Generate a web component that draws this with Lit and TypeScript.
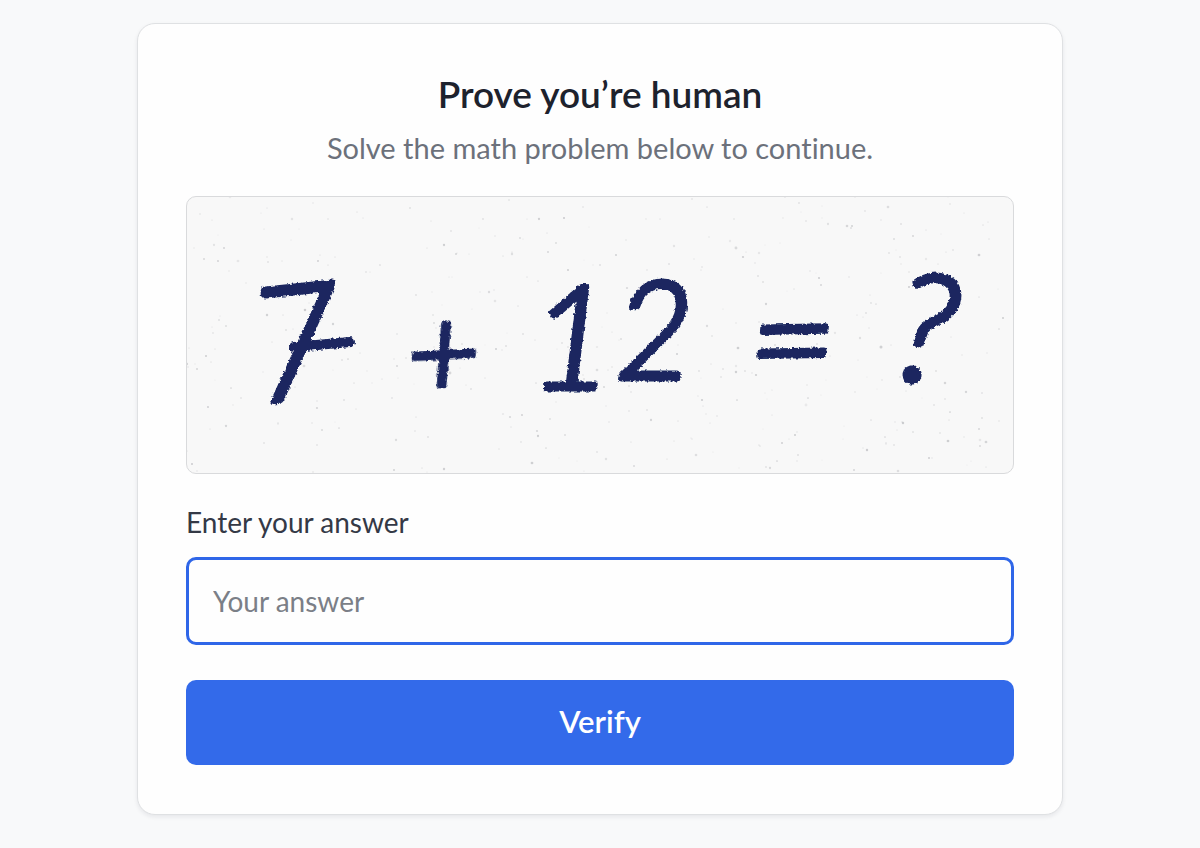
import { LitElement, css, html, svg } from "lit";
import { customElement, state } from "lit/decorators.js";

interface Mark {
  char: string;
  x: number;
  y: number;
  size: number;
  turn: number;
}

const MARKS: Mark[] = [
  { char: "7", x: 68, y: 207, size: 160, turn: -6 },
  { char: "+", x: 222, y: 202, size: 126, turn: -3 },
  { char: "1", x: 343, y: 192, size: 144, turn: 0 },
  { char: "2", x: 428, y: 182, size: 136, turn: 0 },
  { char: "=", x: 562, y: 197, size: 154, turn: -1 },
  { char: "?", x: 700, y: 180, size: 152, turn: 9 },
];

// Small seeded generator, so that the paper grain is the same on every render.
function grain(count: number) {
  let seed = 7;
  const next = () => {
    seed = (seed * 16807) % 2147483647;
    return seed / 2147483647;
  };
  return Array.from({ length: count }, () => ({
    x: Math.round(next() * 826),
    y: Math.round(next() * 276),
    r: 0.5 + next() * next() * 1.1,
    o: 0.2 + next() * 0.45,
  }));
}

const GRAIN = grain(420);

@customElement("math-challenge")
export class MathChallenge extends LitElement {
  static styles = css`
    :host {
      display: block;
      border: 1px solid #d9dadc;
      border-radius: 10px;
      background: #f8f8f8;
      overflow: hidden;
    }
    .sheet {
      display: block;
      width: 100%;
      height: auto;
    }
    .speck {
      fill: #b4b5b9;
    }
    .mark {
      fill: #1b2860;
      stroke: #1b2860;
      stroke-width: 5;
      stroke-linejoin: round;
      font-family: Lato, "Open Sans", sans-serif;
      font-style: italic;
      font-weight: 300;
    }
    .bar {
      stroke: #1b2860;
      stroke-width: 10;
      stroke-linecap: round;
    }
  `;

  render() {
    return html`
      <svg class="sheet" viewBox="0 0 826 276">
        <defs>
          <filter id="ink" x="-5%" y="-10%" width="110%" height="120%">
            <feTurbulence type="fractalNoise" baseFrequency="0.35" numOctaves="2" seed="4" result="noise" />
            <feDisplacementMap
              in="SourceGraphic"
              in2="noise"
              scale="4"
              xChannelSelector="R"
              yChannelSelector="G"
            />
          </filter>
        </defs>
        ${GRAIN.map(
          (g) => svg`<circle class="speck" cx=${g.x} cy=${g.y} r=${g.r} opacity=${g.o}></circle>`
        )}
        <g filter="url(#ink)">
          ${MARKS.map(
            (m) => svg`<text class="mark" x=${m.x} y=${m.y} font-size=${m.size}
              transform="rotate(${m.turn} ${m.x} ${m.y})">${m.char}</text>`
          )}
          <line class="bar" x1="107" y1="150" x2="163" y2="145" />
        </g>
      </svg>
    `;
  }
}

@customElement("app-root")
export class AppRoot extends LitElement {
  static styles = css`
    :host {
      display: block;
      box-sizing: border-box;
      min-height: 100vh;
      padding: 23px 24px 33px;
      background: #f8f9fa;
      font-family: Lato, "Open Sans", sans-serif;
      font-variant-ligatures: none;
      color: #1d222d;
    }
    .card {
      box-sizing: border-box;
      max-width: 926px;
      margin: 0 auto;
      padding: 46px 48px 49px;
      border: 1px solid #dfe1e3;
      border-radius: 18px;
      background: #fefefe;
      box-shadow: 0 2px 4px rgba(20, 30, 50, 0.08);
    }
    .title {
      margin: 0;
      font-size: 37px;
      line-height: 48px;
      font-weight: 600;
      text-align: center;
    }
    .hint {
      margin: 11px 0 29px;
      font-size: 29px;
      line-height: 38px;
      color: #6c717b;
      text-align: center;
    }
    .form {
      display: flex;
      flex-direction: column;
    }
    .label {
      margin: 29px 0 16px;
      font-size: 28px;
      line-height: 38px;
      color: #343946;
    }
    .answer {
      box-sizing: border-box;
      width: 100%;
      height: 88px;
      padding: 0 24px;
      border: 3px solid #2f66e8;
      border-radius: 10px;
      outline: none;
      background: #fefefe;
      font: inherit;
      font-size: 28px;
      color: #1d222d;
    }
    .answer::placeholder {
      color: #7b7f87;
      opacity: 1;
    }
    .verify {
      height: 85px;
      margin-top: 35px;
      padding: 0 0 4px;
      border: 0;
      border-radius: 10px;
      background: #336aea;
      font: inherit;
      font-size: 31px;
      font-weight: 600;
      color: #ffffff;
      cursor: pointer;
    }
  `;

  @state() private answer = "";

  private onInput(e: Event) {
    this.answer = (e.target as HTMLInputElement).value;
  }

  private onSubmit(e: Event) {
    e.preventDefault();
  }

  render() {
    return html`
      <main class="card">
        <h1 class="title">Prove you’re human</h1>
        <p class="hint">Solve the math problem below to continue.</p>
        <math-challenge></math-challenge>
        <form class="form" @submit=${this.onSubmit}>
          <label class="label" for="answer">Enter your answer</label>
          <input
            class="answer"
            id="answer"
            type="text"
            inputmode="numeric"
            autocomplete="off"
            placeholder="Your answer"
            .value=${this.answer}
            @input=${this.onInput}
          />
          <button class="verify" type="submit">Verify</button>
        </form>
      </main>
    `;
  }
}
